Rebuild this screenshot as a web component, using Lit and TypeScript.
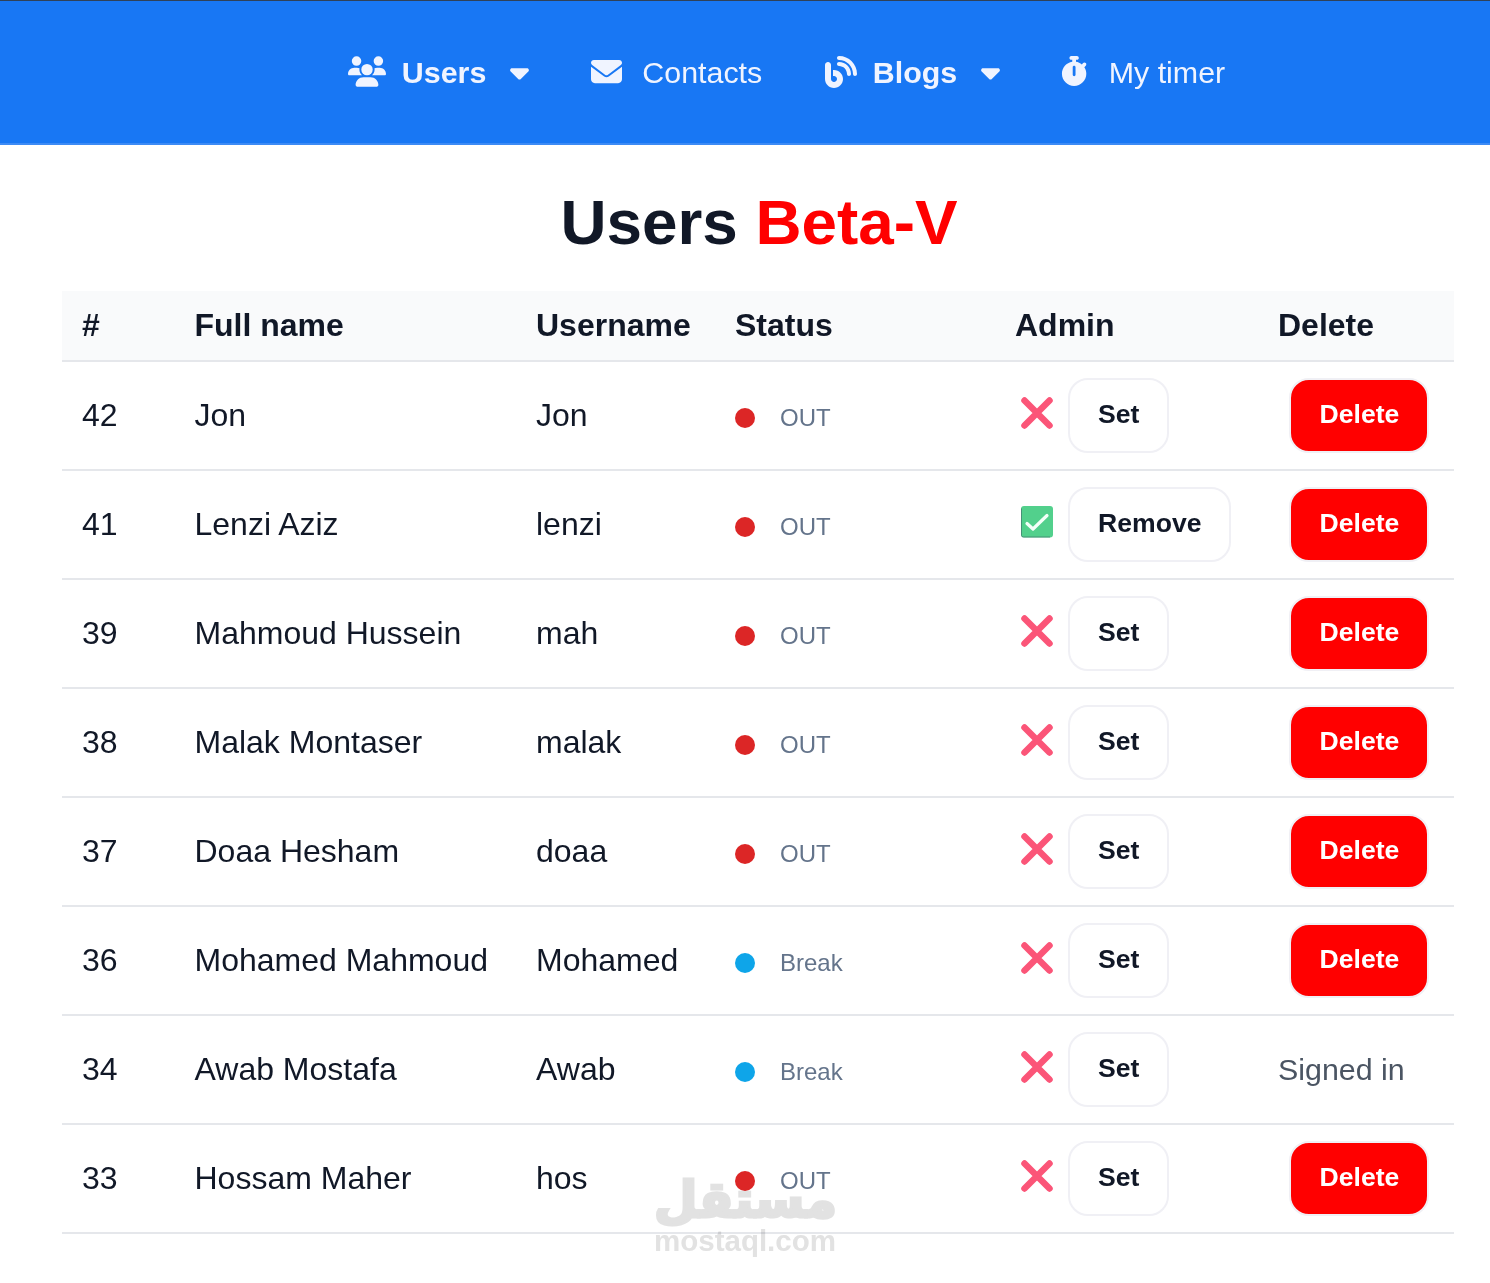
import { LitElement, html, css, unsafeCSS } from "lit";
import { customElement } from "lit/decorators.js";

const FONT = unsafeCSS(`"Liberation Sans", Arial, sans-serif`);

const icons = {
  users: { vb: "0 0 640 512", d: "M144 0a80 80 0 1 1 0 160A80 80 0 1 1 144 0zM512 0a80 80 0 1 1 0 160A80 80 0 1 1 512 0zM0 298.700C0 239.800 47.800 192 106.700 192h42.700c15.900 0 31 3.500 44.600 9.700c-1.300 7.200-1.900 14.700-1.900 22.300c0 38.200 16.800 72.500 43.300 96c-.2 0-.4 0-.7 0H21.300C9.600 320 0 310.400 0 298.700zM405.300 320c-.2 0-.4 0-.7 0c26.600-23.500 43.300-57.800 43.300-96c0-7.600-.7-15-1.900-22.300c13.600-6.300 28.700-9.700 44.600-9.700h42.700C592.200 192 640 239.800 640 298.700c0 11.800-9.600 21.300-21.300 21.300H405.300zM224 224a96 96 0 1 1 192 0 96 96 0 1 1 -192 0zM128 485.300C128 411.700 187.700 352 261.300 352H378.700C452.300 352 512 411.700 512 485.300c0 14.700-11.900 26.700-26.700 26.700H154.700c-14.700 0-26.700-11.900-26.700-26.700z" },
  envelope: { vb: "0 0 512 512", d: "M48 64C21.500 64 0 85.500 0 112c0 15.100 7.100 29.300 19.200 38.400L236.800 313.600c11.400 8.500 27 8.500 38.400 0L492.800 150.400c12.100-9.100 19.200-23.300 19.200-38.400c0-26.500-21.500-48-48-48H48zM0 176V384c0 35.300 28.700 64 64 64H448c35.300 0 64-28.700 64-64V176L294.400 339.200c-22.800 17.100-54 17.100-76.800 0L0 176z" },
  blog: { vb: "0 0 512 512", d: "M192 32c0 17.700 14.300 32 32 32c123.700 0 224 100.300 224 224c0 17.700 14.300 32 32 32s32-14.300 32-32C512 128.900 383.100 0 224 0c-17.700 0-32 14.300-32 32zm0 96c0 17.700 14.300 32 32 32c70.700 0 128 57.300 128 128c0 17.700 14.300 32 32 32s32-14.300 32-32c0-106-86-192-192-192c-17.700 0-32 14.300-32 32zM96 144c0-26.500-21.500-48-48-48S0 117.500 0 144V368c0 79.500 64.500 144 144 144s144-64.500 144-144s-64.500-144-144-144H128v96h16c26.500 0 48 21.500 48 48s-21.500 48-48 48s-48-21.500-48-48V144z" },
  stopwatch: { vb: "0 0 448 512", d: "M176 0c-17.700 0-32 14.300-32 32s14.300 32 32 32h16V98.400C92.300 113.800 16 200 16 304c0 114.900 93.100 208 208 208s208-93.100 208-208c0-41.800-12.300-80.700-33.500-113.200l24.100-24.100c12.500-12.500 12.500-32.800 0-45.300s-32.800-12.500-45.300 0L355.700 143c-28.100-23-62.200-38.800-99.700-44.600V64h16c17.700 0 32-14.300 32-32s-14.300-32-32-32H224 176zm72 192V320c0 13.300-10.700 24-24 24s-24-10.700-24-24V192c0-13.300 10.700-24 24-24s24 10.700 24 24z" },
  caret: { vb: "0 0 320 512", d: "M137.400 374.600c12.500 12.500 32.800 12.500 45.300 0l128-128c9.200-9.200 11.900-22.900 6.900-34.900s-16.600-19.800-29.600-19.800L32 192c-12.900 0-24.600 7.800-29.600 19.800s-2.200 25.700 6.900 34.900l128 128z" },
};

type Row = { id: number; name: string; user: string; status: "OUT" | "Break"; admin: boolean; self?: boolean };
const rows: Row[] = [
  { id: 42, name: "Jon", user: "Jon", status: "OUT", admin: false },
  { id: 41, name: "Lenzi Aziz", user: "lenzi", status: "OUT", admin: true },
  { id: 39, name: "Mahmoud Hussein", user: "mah", status: "OUT", admin: false },
  { id: 38, name: "Malak Montaser", user: "malak", status: "OUT", admin: false },
  { id: 37, name: "Doaa Hesham", user: "doaa", status: "OUT", admin: false },
  { id: 36, name: "Mohamed Mahmoud", user: "Mohamed", status: "Break", admin: false },
  { id: 34, name: "Awab Mostafa", user: "Awab", status: "Break", admin: false, self: true },
  { id: 33, name: "Hossam Maher", user: "hos", status: "OUT", admin: false },
];

const icon = (k: keyof typeof icons, cls: string) =>
  html`<svg class=${cls} viewBox=${icons[k].vb} fill="currentColor"><path d=${icons[k].d}></path></svg>`;

const cross = html`<svg class="mark" viewBox="0 0 32 32"><path d="M3.500 3.500L28.500 28.500M28.500 3.500L3.500 28.500" stroke="#fb5578" stroke-width="6.500" stroke-linecap="round" fill="none"></path></svg>`;
const check = html`<svg class="mark" viewBox="0 0 32 32"><rect width="32" height="31.500" rx="3" fill="#52d08c"></rect><path d="M.5 2.500V29.500Q.5 31 2.500 31H29" stroke="#3f6f6a" stroke-width="1" opacity=".65" fill="none"></path><path d="M6 17.500L12 23L26 9.500" stroke="#f4fff8" stroke-width="3.200" stroke-linecap="round" stroke-linejoin="round" fill="none"></path></svg>`;

@customElement("app-root")
export class AppRoot extends LitElement {
  static styles = css`
    :host { display: block; font-family: ${FONT}; color: #111827; background: #fff; min-height: 1283px; position: relative; }
    * { box-sizing: border-box; }
    header { height: 145px; background: #1877f4; border-top: 1px solid #2f4158; border-bottom: 2px solid #3d8bf5; display: flex; justify-content: center; align-items: center; color: #f0f4ff; font-size: 30.4px; padding: 0 0 0 83px; }
    nav { display: flex; align-items: center; }
    .item { display: flex; align-items: center; }
    .item.bold { font-weight: 700; }
    .ic-users { width: 38px; height: 31px; margin-right: 16px; margin-top: -2px; }
    .ic-env { width: 31px; height: 31px; margin-right: 20px; margin-top: -2px; }
    .ic-blog { width: 32px; height: 32px; margin-right: 15.5px; margin-top: -1px; }
    .ic-watch { width: 26.250px; height: 30px; margin-right: 21.750px; margin-top: -2px; }
    .ic-caret { width: 19px; height: 30px; margin-left: 24px; }
    .users { margin-right: 62px; }
    .contacts { margin-right: 63px; }
    .blogs { margin-right: 60.5px; }
    h1 { margin: 0; padding: 42px 0 34px; text-align: center; font-size: 63.8px; line-height: 70px; font-weight: 700; transform: translateX(14px); }
    h1 span { color: #ff0000; }
    .wrap { padding: 0 36px 0 62px; }
    table { width: 100%; border-collapse: collapse; table-layout: fixed; font-size: 32px; }
    col.c1 { width: 112.500px; } col.c2 { width: 341.500px; } col.c3 { width: 199px; } col.c4 { width: 280px; } col.c5 { width: 263px; } col.c6 { width: 196px; }
    thead tr { background: #f9fafb; height: 70px; border-bottom: 2px solid #e5e7eb; }
    th { text-align: left; font-weight: 700; padding: 0 0 0 20px; }
    tbody tr { height: 109px; border-bottom: 2px solid #e5e7eb; }
    td { padding: 0 0 0 20px; }
    .status { display: flex; align-items: center; font-size: 24px; color: #64748b; position: relative; top: 2px; }
    .dot { width: 20px; height: 20px; border-radius: 50%; margin-right: 25px; }
    .dot.out { background: #dc2626; }
    .dot.brk { background: #0ea5e9; }
    .admin { display: flex; align-items: center; }
    .mark { width: 32px; height: 32px; margin: 0 15px 0 6px; position: relative; top: -3px; }
    button { font-family: inherit; cursor: pointer; }
    .set { height: 75px; padding: 0 28px 2px; background: #fff; border: 2px solid #f0f0f5; border-radius: 20px; font-size: 26.6px; font-weight: 700; color: #111827; }
    .del { display: block; margin-left: 11px; width: 140px; height: 75px; padding: 0 0 2px 1px; background: #ff0000; border: 2px solid #f0f0f5; border-radius: 20px; font-size: 26.6px; font-weight: 700; color: #fff; }
    .signed { font-size: 30.4px; color: #4b5563; }
    .wm { position: absolute; left: 654px; top: 1170px; width: 182px; text-align: center; color: #e2e2e2; mix-blend-mode: multiply; font-weight: 700; pointer-events: none; }
    .wm .ar { font-family: "DejaVu Sans", sans-serif; font-size: 50px; line-height: 60px; -webkit-text-stroke: 3px #e2e2e2; }
    .wm .en { font-size: 29.500px; line-height: 30px; white-space: nowrap; margin-top: -4px; }
  `;

  render() {
    return html`
      <header>
        <nav>
          <div class="item bold users">${icon("users", "ic-users")}Users${icon("caret", "ic-caret")}</div>
          <div class="item contacts">${icon("envelope", "ic-env")}Contacts</div>
          <div class="item bold blogs">${icon("blog", "ic-blog")}Blogs${icon("caret", "ic-caret")}</div>
          <div class="item">${icon("stopwatch", "ic-watch")}My timer</div>
        </nav>
      </header>
      <h1>Users <span>Beta-V</span></h1>
      <div class="wrap">
        <table>
          <colgroup><col class="c1" /><col class="c2" /><col class="c3" /><col class="c4" /><col class="c5" /><col class="c6" /></colgroup>
          <thead><tr><th>#</th><th>Full name</th><th>Username</th><th>Status</th><th>Admin</th><th>Delete</th></tr></thead>
          <tbody>
            ${rows.map((r) => html`<tr>
              <td>${r.id}</td>
              <td>${r.name}</td>
              <td>${r.user}</td>
              <td><div class="status"><span class="dot ${r.status === "OUT" ? "out" : "brk"}"></span>${r.status}</div></td>
              <td><div class="admin">${r.admin ? check : cross}<button class="set">${r.admin ? "Remove" : "Set"}</button></div></td>
              <td>${r.self ? html`<span class="signed">Signed in</span>` : html`<button class="del">Delete</button>`}</td>
            </tr>`)}
          </tbody>
        </table>
      </div>
      <div class="wm"><div class="ar">مستقل</div><div class="en">mostaql.com</div></div>
    `;
  }
}
